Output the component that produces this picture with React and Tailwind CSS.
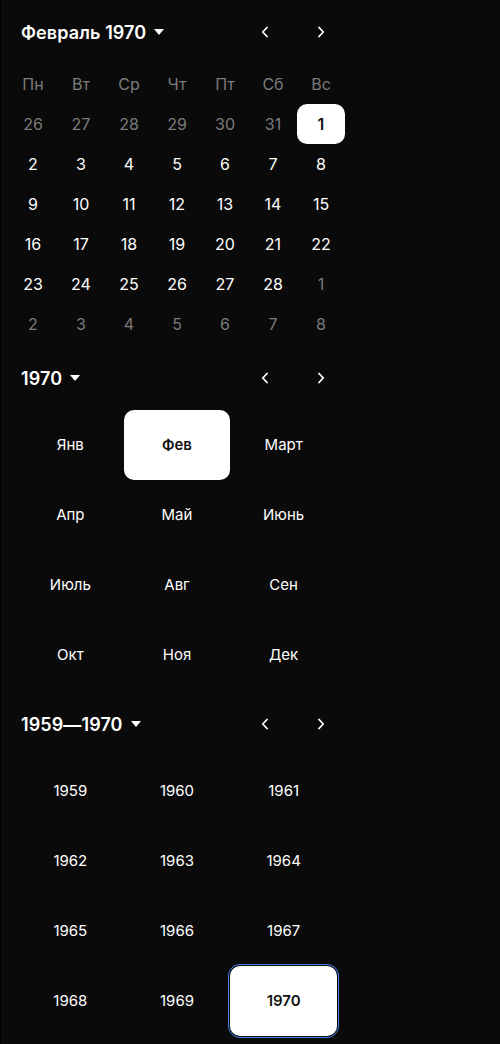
import React from "react";

const WEEKDAYS = ["Пн", "Вт", "Ср", "Чт", "Пт", "Сб", "Вс"];
const MONTHS = ["Янв", "Фев", "Март", "Апр", "Май", "Июнь", "Июль", "Авг", "Сен", "Окт", "Ноя", "Дек"];

// February 1970, week starts on Monday
const DAYS = [
  ...[26, 27, 28, 29, 30, 31].map((d) => ({ d, out: true })),
  ...Array.from({ length: 28 }, (_, i) => ({ d: i + 1, out: false })),
  ...[1, 2, 3, 4, 5, 6, 7, 8].map((d) => ({ d, out: true })),
];

const YEARS = Array.from({ length: 12 }, (_, i) => 1959 + i);

function Caret() {
  return (
    <svg width="10" height="6" viewBox="0 0 10 6" className="ml-2">
      <path d="M0 0h10L5 6z" fill="currentColor" />
    </svg>
  );
}

function Chevron({ dir }) {
  return (
    <svg width="24" height="24" viewBox="0 0 24 24" fill="none">
      <path
        d={dir === "left" ? "M14 7.5 9.75 12 14 16.5" : "M10 7.5 14.25 12 10 16.5"}
        stroke="currentColor"
        strokeWidth="1.8"
        strokeLinecap="round"
        strokeLinejoin="round"
      />
    </svg>
  );
}

function Header({ title }) {
  return (
    <div className="flex h-11 items-center justify-between px-3">
      <button className="flex items-center text-[18px] font-semibold tracking-[0.1px] text-white">
        {title}
        <Caret />
      </button>
      <div className="flex items-center gap-8 text-white">
        <button className="flex h-6 w-6 items-center justify-center">
          <Chevron dir="left" />
        </button>
        <button className="flex h-6 w-6 items-center justify-center">
          <Chevron dir="right" />
        </button>
      </div>
    </div>
  );
}

function DayView() {
  return (
    <section>
      <Header title="Февраль 1970" />
      <div className="mt-2.5 grid grid-cols-7">
        {WEEKDAYS.map((w) => (
          <div key={w} className="flex h-10 items-center justify-center text-[16px] text-[#7b7b7b]">
            {w}
          </div>
        ))}
        {DAYS.map((day, i) => {
          const selected = !day.out && day.d === 1;
          return (
            <button
              key={i}
              className={
                selected
                  ? "flex h-10 items-center justify-center rounded-[10px] bg-white text-[16px] font-semibold text-[#111]"
                  : day.out
                  ? "flex h-10 items-center justify-center text-[16px] text-[#7b7b7b]"
                  : "flex h-10 items-center justify-center text-[16px] text-white"
              }
            >
              {day.d}
            </button>
          );
        })}
      </div>
    </section>
  );
}

function MonthView() {
  return (
    <section>
      <Header title="1970" />
      <div className="mt-2.5 grid grid-cols-3 px-2">
        {MONTHS.map((m) => {
          const selected = m === "Фев";
          return (
            <button
              key={m}
              className={
                selected
                  ? "flex h-[70px] items-center justify-center rounded-[10px] bg-white text-[15px] font-semibold text-[#111]"
                  : "flex h-[70px] items-center justify-center text-[15px] text-white"
              }
            >
              {m}
            </button>
          );
        })}
      </div>
    </section>
  );
}

function YearView() {
  return (
    <section>
      <Header title="1959—1970" />
      <div className="mt-2.5 grid grid-cols-3 px-2">
        {YEARS.map((y) => {
          const selected = y === 1970;
          return (
            <button
              key={y}
              className={
                selected
                  ? "flex h-[70px] items-center justify-center rounded-[10px] bg-white text-[15px] font-semibold text-[#111] outline-[1.5px] outline-offset-1 outline-[#3f83ec] outline-solid"
                  : "flex h-[70px] items-center justify-center text-[15px] text-white"
              }
            >
              {y}
            </button>
          );
        })}
      </div>
    </section>
  );
}

export default function App() {
  return (
    <div
      className="min-h-[1044px] border-l border-black bg-[#0a0a0a] pt-2.5"
      style={{ fontFamily: "Inter, 'Noto Sans', sans-serif" }}
    >
      <div className="flex w-[344px] flex-col gap-3 pl-2">
        <DayView />
        <MonthView />
        <YearView />
      </div>
    </div>
  );
}
